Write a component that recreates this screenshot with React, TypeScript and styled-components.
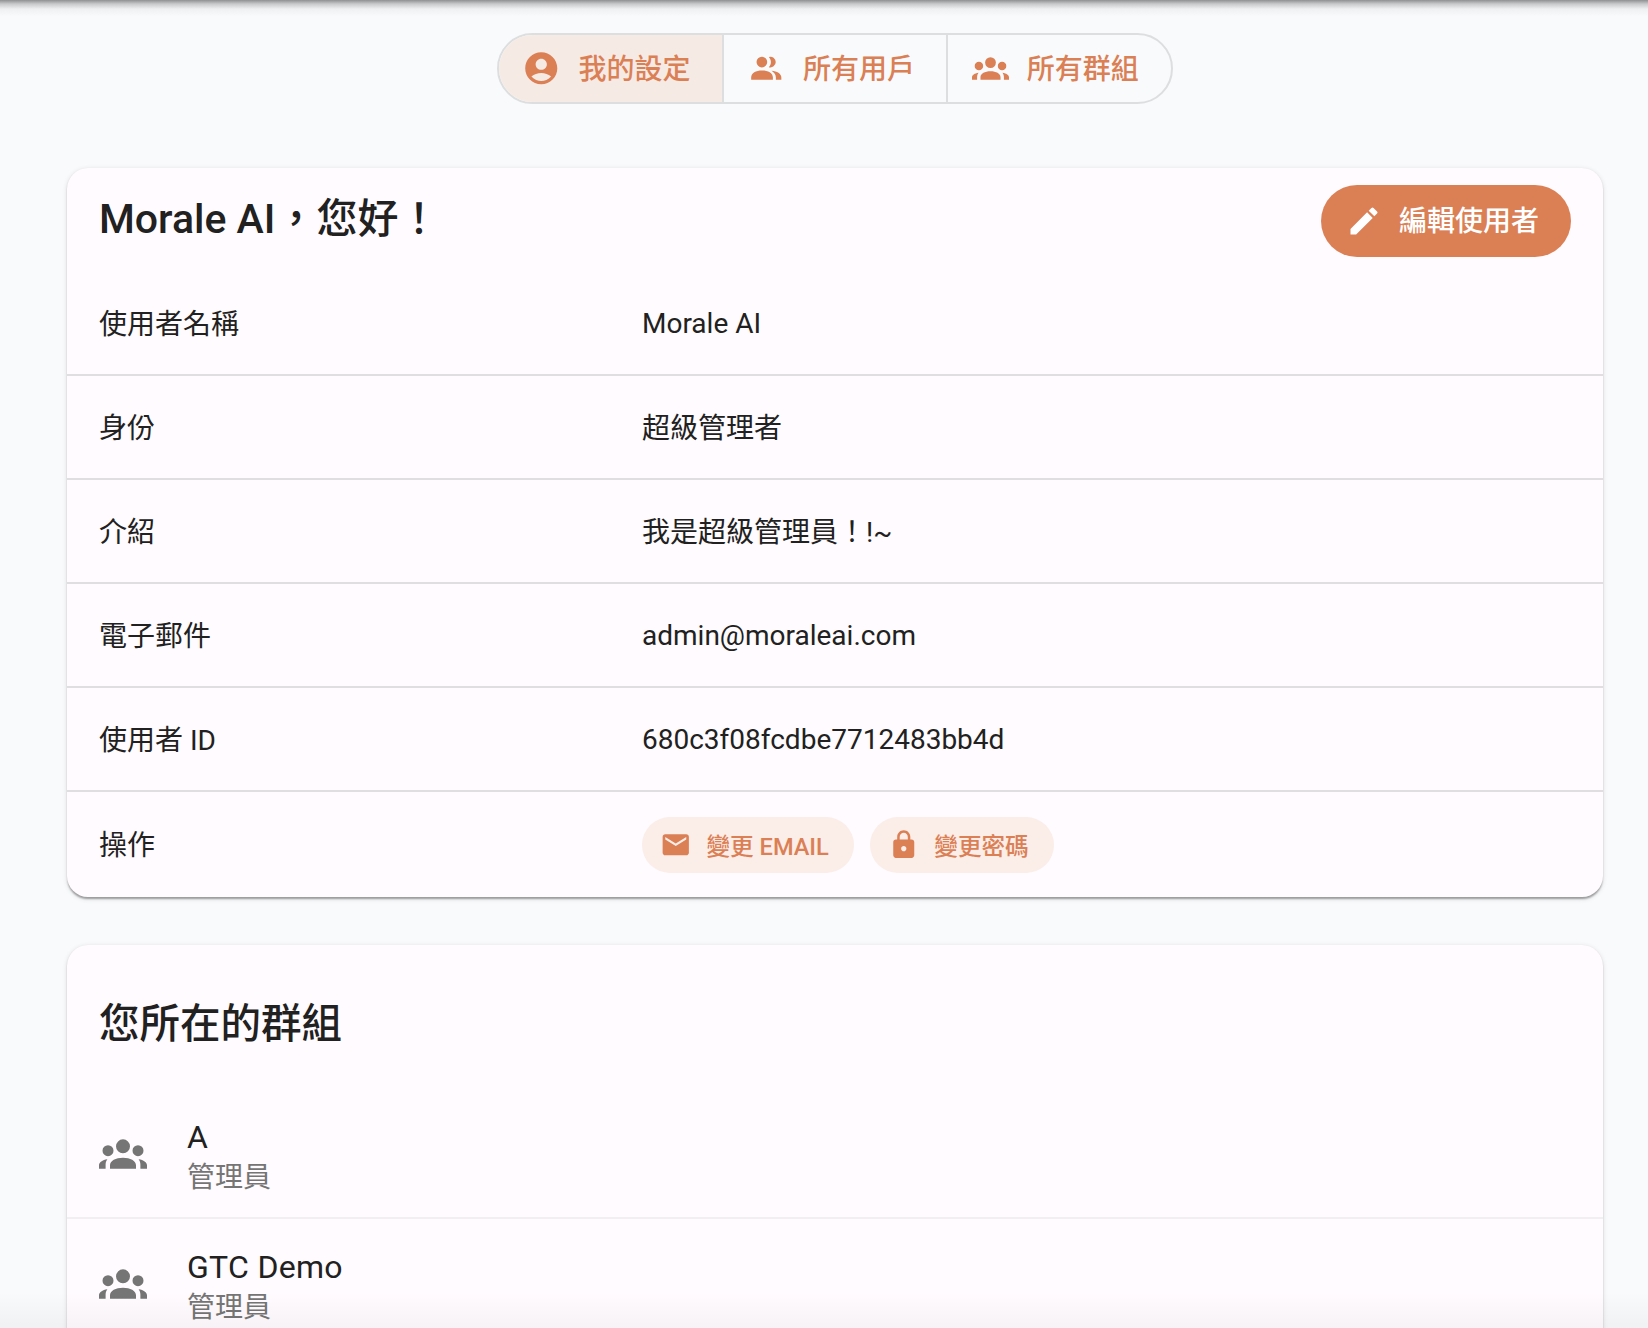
import React from 'react';
import styled, {createGlobalStyle} from "styled-components";

const ICONS = {
    account: "M12 2C6.48 2 2 6.48 2 12s4.48 10 10 10 10-4.48 10-10S17.52 2 12 2zm0 4c1.93 0 3.5 1.57 3.5 3.5S13.93 13 12 13s-3.5-1.57-3.5-3.5S10.07 6 12 6zm0 14c-2.03 0-4.43-.82-6.14-2.88C7.55 15.8 9.68 15 12 15s4.45.8 6.14 2.12C16.43 19.18 14.03 20 12 20z",
    people: "M9.27 4.8a3.33 3.33 0 1 0 0 6.66 3.33 3.33 0 0 0 0-6.66zM13.6 4.95a3.33 3.33 0 1 1 0 6.36C14.5 10.4 14.9 9.3 14.9 8.13S14.5 5.85 13.6 4.95zM2.6 19.2v-1.5c0-2.8 3-4.35 6.77-4.35s6.78 1.55 6.78 4.35v1.5zM15.3 13.5c3.4.3 6.1 1.8 6.1 4.2v1.5h-3.4v-1.5c0-1.7-1-3.1-2.7-4.2z",
    groups: "M12 4.67a3.5 3.5 0 1 0 0 7 3.5 3.5 0 0 0 0-7zM4.5 7.58a2.75 2.75 0 1 0 0 5.5 2.75 2.75 0 0 0 0-5.5zM19.5 7.58a2.75 2.75 0 1 0 0 5.5 2.75 2.75 0 0 0 0-5.5zM5.5 19.33v-1.7c0-2.3 2.9-3.8 6.5-3.8s6.5 1.5 6.5 3.8v1.7zM0 19.33v-1.6c0-1.5 1.7-2.7 4.2-3.05-.6.8-.9 1.7-.9 2.7v1.95zM24 19.33v-1.6c0-1.5-1.7-2.7-4.2-3.05.6.8.9 1.7.9 2.7v1.95z",
    edit: "M3 17.25V21h3.75L17.81 9.94l-3.75-3.75L3 17.25zM20.71 7.04c.39-.39.39-1.02 0-1.41l-2.34-2.34a.9959.9959 0 0 0-1.41 0l-1.83 1.83 3.75 3.75 1.83-1.83z",
    email: "M20 4H4c-1.1 0-1.99.9-1.99 2L2 18c0 1.1.9 2 2 2h16c1.1 0 2-.9 2-2V6c0-1.1-.9-2-2-2zm0 4-8 5-8-5V6l8 5 8-5v2z",
    lock: "M18 8h-1V6c0-2.76-2.24-5-5-5S7 3.24 7 6v2H6c-1.1 0-2 .9-2 2v10c0 1.1.9 2 2 2h12c1.1 0 2-.9 2-2V10c0-1.1-.9-2-2-2zm-6 9c-1.1 0-2-.9-2-2s.9-2 2-2 2 .9 2 2-.9 2-2 2zm3.1-9H8.9V6c0-1.71 1.39-3.1 3.1-3.1 1.71 0 3.1 1.39 3.1 3.1v2z",
};

function Icon({name, size}: {name: keyof typeof ICONS, size: number}) {
    return (
        <S.icon $size={size} viewBox="0 0 24 24" aria-hidden="true">
            <path d={ICONS[name]}/>
        </S.icon>
    );
}

const tabs: {label: string, icon: keyof typeof ICONS, size: number, active?: boolean}[] = [
    {label: '我的設定', icon: 'account', size: 38.5, active: true},
    {label: '所有用戶', icon: 'people', size: 38.5},
    {label: '所有群組', icon: 'groups', size: 37},
];

const infoRows = [
    {label: '使用者名稱', value: 'Morale AI', latin: true},
    {label: '身份', value: '超級管理者'},
    {label: '介紹', value: '我是超級管理員！!~'},
    {label: '電子郵件', value: 'admin@moraleai.com', latin: true},
    {label: '使用者 ID', value: '680c3f08fcdbe7712483bb4d', latin: true},
];

const groups = [
    {name: 'A', role: '管理員'},
    {name: 'GTC Demo', role: '管理員'},
];

function App() {
    return (
        <S.page>
            <GlobalStyle/>
            <S.topShadow/>
            <S.tabs>
                {tabs.map(tab => (
                    <S.tab key={tab.label} $active={tab.active}>
                        <Icon name={tab.icon} size={tab.size}/>
                        <S.tabLabel>{tab.label}</S.tabLabel>
                    </S.tab>
                ))}
            </S.tabs>
            <S.card>
                <S.header>
                    <S.title>Morale AI，您好！</S.title>
                    <S.editButton>
                        <Icon name="edit" size={36}/>
                        <S.tabLabel>編輯使用者</S.tabLabel>
                    </S.editButton>
                </S.header>
                {infoRows.map(row => (
                    <S.row key={row.label}>
                        <span>{row.label}</span>
                        <S.value $latin={row.latin}>{row.value}</S.value>
                    </S.row>
                ))}
                <S.row $last>
                    <span>操作</span>
                    <S.actions>
                        <S.actionButton>
                            <Icon name="email" size={31.5}/>
                            變更 EMAIL
                        </S.actionButton>
                        <S.actionButton>
                            <Icon name="lock" size={31.5}/>
                            變更密碼
                        </S.actionButton>
                    </S.actions>
                </S.row>
            </S.card>
            <S.card>
                <S.groupTitle>您所在的群組</S.groupTitle>
                {groups.map(group => (
                    <S.groupItem key={group.name}>
                        <S.groupIcon>
                            <Icon name="groups" size={48}/>
                        </S.groupIcon>
                        <S.groupText>
                            <S.groupName>{group.name}</S.groupName>
                            <S.groupRole>{group.role}</S.groupRole>
                        </S.groupText>
                    </S.groupItem>
                ))}
            </S.card>
            <S.bottomFade/>
        </S.page>
    );
}

const GlobalStyle = createGlobalStyle`
    html, body {
        margin: 0;
        padding: 0;
        height: 100%;
        overflow: hidden;
        background: #f8fafb;
    }
    body {
        font-family: Roboto, "Noto Sans CJK TC", sans-serif;
        font-size: 28px;
        color: #212121;
    }
`;

const S = {
    page: styled.div`
        position: relative;
        display: flex;
        flex-direction: column;
        align-items: center;
        gap: 47px;
        height: 1328px;
        box-sizing: border-box;
        padding: 33px 45px 0 67px;
        overflow: hidden;
        background: #f8fafb;
    `,
    topShadow: styled.div`
        position: absolute;
        top: 0;
        left: 0;
        right: 0;
        height: 16px;
        background: linear-gradient(#8f9091 0, #c9cacb 4px, #eef0f1 9px, rgba(248, 250, 251, 0) 16px);
    `,
    bottomFade: styled.div`
        position: absolute;
        bottom: 0;
        left: 0;
        right: 0;
        height: 36px;
        background: linear-gradient(rgba(0, 0, 0, 0), rgba(0, 0, 0, 0.035));
    `,
    icon: styled.svg<{$size: number}>`
        flex: none;
        width: ${({$size}) => $size}px;
        height: ${({$size}) => $size}px;
        fill: currentColor;
    `,
    tabs: styled.div`
        flex: none;
        display: grid;
        grid-template-columns: 223px 224px 225px;
        height: 71px;
        margin-bottom: 17px;
        border: 2px solid #dcdedf;
        border-radius: 36px;
        overflow: hidden;
        box-sizing: border-box;
    `,
    tab: styled.div<{$active?: boolean}>`
        display: flex;
        align-items: center;
        justify-content: center;
        gap: 17.5px;
        padding-right: 8px;
        font-weight: 500;
        color: #db7f55;
        background: ${({$active}) => $active ? '#f6eae5' : 'transparent'};
        & + & {
            border-left: 2px solid #dcdedf;
        }
    `,
    tabLabel: styled.span`
        padding-bottom: 4px;
    `,
    card: styled.div`
        flex: none;
        align-self: stretch;
        background: #fffbfe;
        border-radius: 21px;
        box-shadow: 0 3.5px 2px -1.75px rgba(0, 0, 0, 0.2), 0 1.75px 1.75px rgba(0, 0, 0, 0.14), 0 1.75px 5px rgba(0, 0, 0, 0.12);
        & + & {
            margin-top: 1px;
        }
    `,
    header: styled.div`
        display: flex;
        align-items: center;
        justify-content: space-between;
        padding: 17px 32px 15px;
    `,
    title: styled.div`
        font-size: 41px;
        font-weight: 500;
        line-height: 1.5;
        margin-top: -2px;
    `,
    editButton: styled.div`
        display: flex;
        align-items: center;
        gap: 17px;
        height: 72px;
        padding: 0 32px 0 25px;
        border-radius: 36px;
        font-weight: 500;
        color: #fff;
        background: #db7f55;
    `,
    row: styled.div<{$last?: boolean}>`
        display: grid;
        grid-template-columns: 543px 1fr;
        align-items: center;
        height: ${({$last}) => $last ? '105px' : '104px'};
        box-sizing: border-box;
        padding: 0 32px 3px;
        border-bottom: ${({$last}) => $last ? 'none' : '2px solid #e0dee1'};
    `,
    value: styled.span<{$latin?: boolean}>`
        padding-top: ${({$latin}) => $latin ? '3px' : '0'};
    `,
    actions: styled.div`
        display: flex;
        gap: 16px;
        margin-top: 4px;
    `,
    actionButton: styled.div`
        display: flex;
        align-items: center;
        gap: 15px;
        height: 56px;
        padding: 0 25px 0 18px;
        border-radius: 28px;
        font-size: 23.6px;
        font-weight: 500;
        color: #db7f55;
        background: #fbede8;
    `,
    groupTitle: styled.div`
        font-size: 40.5px;
        font-weight: 500;
        line-height: 60px;
        padding: 49px 32px 35px;
    `,
    groupItem: styled.div`
        display: flex;
        align-items: center;
        height: 130px;
        box-sizing: border-box;
        padding: 0 32px;
        border-bottom: 2px solid #f1eff2;
    `,
    groupIcon: styled.div`
        display: flex;
        width: 88px;
        padding-top: 2px;
        color: #757575;
    `,
    groupText: styled.div`
        display: flex;
        flex-direction: column;
        padding-top: 5px;
    `,
    groupName: styled.div`
        font-size: 32px;
        letter-spacing: 0.3px;
        line-height: 44px;
    `,
    groupRole: styled.div`
        font-size: 28px;
        line-height: 38px;
        color: #757575;
    `,
};

export default App;
